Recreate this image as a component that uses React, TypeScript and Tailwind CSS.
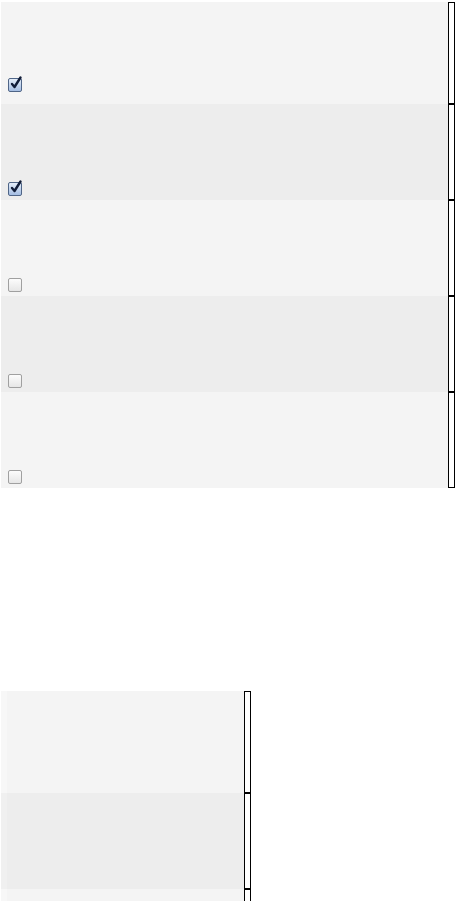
const topRows = [
  { checked: true, first: true },
  { checked: true, first: false },
  { checked: false, first: false },
  { checked: false, first: false },
  { checked: false, first: false },
];

const bottomRows = [{ first: true }, { first: false }, { first: false }];

const CheckBox = ({ checked }: { checked: boolean }) => (
  <div
    className={`relative w-[14px] h-[14px] rounded-[2px] border ${
      checked ? 'border-[#4f6587] bg-gradient-to-b from-[#e4edf9] to-[#a4bde2]' : 'border-[#a0a0a0] bg-gradient-to-b from-[#fcfcfc] to-[#e6e6e6]'
    }`}
  >
    {checked && (
      <svg width="14" height="15" viewBox="0 0 14 15" className="absolute left-[0px] -top-[4px]">
        <path d="M3 9 L5.5 12 L11.5 2.5" fill="none" stroke="#101c38" strokeWidth="2.4" strokeLinecap="round" strokeLinejoin="round" />
      </svg>
    )}
  </div>
);

const SideBox = () => <div className="w-[7px] shrink-0 border border-black bg-white" />;

const App = () => {
  return (
    <div className="w-[456px] h-[901px] bg-white pt-[2px] overflow-hidden">
      {/* top table */}
      <div className="flex flex-col w-[455px]">
        {topRows.map((row, i) => (
          <div key={i} className={`flex ${row.first ? 'h-[102px]' : 'h-[96px]'}`}>
            <div className={`ml-[1px] flex-1 pl-[7px] ${row.first ? 'pt-[76px]' : 'pt-[78px]'} ${i % 2 === 0 ? 'bg-[#f4f4f4]' : 'bg-[#ededed]'}`}>
              <CheckBox checked={row.checked} />
            </div>
            <SideBox />
          </div>
        ))}
      </div>

      <div className="h-[203px]" />

      {/* bottom table */}
      <div className="flex flex-col w-[251px]">
        {bottomRows.map((row, i) => (
          <div key={i} className={`flex shrink-0 ${row.first ? 'h-[102px]' : 'h-[96px]'}`}>
            <div className={`ml-[1px] flex-1 flex ${i % 2 === 0 ? 'bg-[#f4f4f4]' : 'bg-[#ededed]'}`}>
              <div className={`w-[6px] ${i % 2 === 0 ? 'bg-[#f7f7f7]' : 'bg-[#f0f0f0]'}`} />
            </div>
            <SideBox />
          </div>
        ))}
      </div>
    </div>
  );
};

export default App;
